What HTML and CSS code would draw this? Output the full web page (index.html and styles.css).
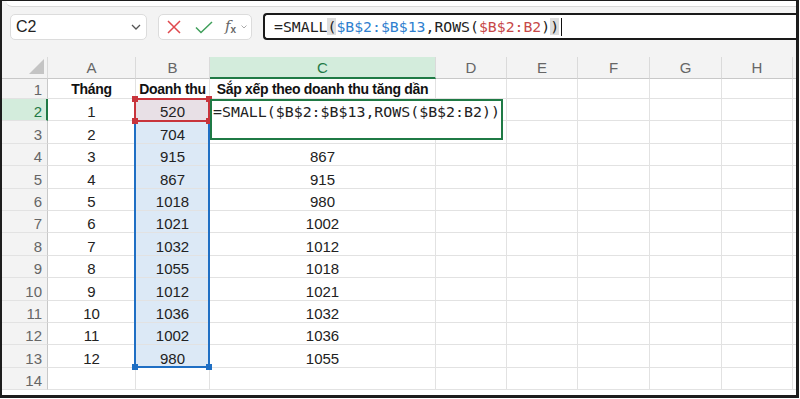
FILE: index.html
```html
<!DOCTYPE html>
<html lang="vi">
<head>
  <meta charset="UTF-8" />
  <meta name="viewport" content="width=device-width, initial-scale=1.0" />
  <title>SMALL - sắp xếp doanh thu</title>
  <link rel="stylesheet" href="styles.css">
</head>
<body>
  <div class="frame">
    <div class="top">
      <div class="ribbon-edge"></div>

      <div class="formula-bar">
        <div class="name-box">
          <span>C2</span>
          <svg width="10" height="6" viewBox="0 0 10 6"><path d="M1 1 L5 5 L9 1" fill="none" stroke="#555" stroke-width="1.3"/></svg>
        </div>
        <div class="fx-box">
          <svg class="ico-x" width="14" height="14" viewBox="0 0 14 14"><path d="M1 1 L13 13 M13 1 L1 13" stroke="#e0484d" stroke-width="1.5" fill="none"/></svg>
          <svg class="ico-ok" width="18" height="13" viewBox="0 0 18 13"><path d="M1 6.5 L6 11.5 L17 1" stroke="#3f9f5a" stroke-width="1.5" fill="none"/></svg>
          <span class="fx"><i>f</i><sub>x</sub></span>
          <svg width="6" height="4" viewBox="0 0 6 4"><path d="M0.5 0.5 L3 3 L5.5 0.5" fill="none" stroke="#aaa" stroke-width="1"/></svg>
        </div>
        <div class="formula-input">
          <span>=SMALL</span><span class="paren">(</span><span class="ref-blue">$B$2:$B$13</span><span>,ROWS(</span><span class="ref-red">$B$2:B2</span><span>)</span><span class="paren">)</span><span class="caret"></span>
        </div>
      </div>
    </div>

    <div class="sheet">
      <div class="row head">
        <div class="corner"><svg width="15" height="15" viewBox="0 0 15 15"><path d="M15 0 L15 15 L0 15 Z" fill="#c4c4c4"/></svg></div>
        <div class="ch">A</div><div class="ch">B</div><div class="ch active">C</div><div class="ch">D</div>
        <div class="ch">E</div><div class="ch">F</div><div class="ch">G</div><div class="ch">H</div><div class="ch end"></div>
      </div>
      <div class="row first">
        <div class="rh">1</div>
        <div class="c b">Tháng</div><div class="c b">Doanh thu</div><div class="c b">Sắp xếp theo doanh thu tăng dần</div>
        <div class="c"></div><div class="c"></div><div class="c"></div><div class="c"></div><div class="c"></div><div class="c end"></div>
      </div>
      <div class="row">
        <div class="rh active">2</div>
        <div class="c">1</div><div class="c cur">520</div><div class="c"></div>
        <div class="c"></div><div class="c"></div><div class="c"></div><div class="c"></div><div class="c"></div><div class="c end"></div>
      </div>
      <div class="row">
        <div class="rh">3</div>
        <div class="c">2</div><div class="c sel">704</div><div class="c"></div>
        <div class="c"></div><div class="c"></div><div class="c"></div><div class="c"></div><div class="c"></div><div class="c end"></div>
      </div>
      <div class="row">
        <div class="rh">4</div>
        <div class="c">3</div><div class="c sel">915</div><div class="c">867</div>
        <div class="c"></div><div class="c"></div><div class="c"></div><div class="c"></div><div class="c"></div><div class="c end"></div>
      </div>
      <div class="row">
        <div class="rh">5</div>
        <div class="c">4</div><div class="c sel">867</div><div class="c">915</div>
        <div class="c"></div><div class="c"></div><div class="c"></div><div class="c"></div><div class="c"></div><div class="c end"></div>
      </div>
      <div class="row">
        <div class="rh">6</div>
        <div class="c">5</div><div class="c sel">1018</div><div class="c">980</div>
        <div class="c"></div><div class="c"></div><div class="c"></div><div class="c"></div><div class="c"></div><div class="c end"></div>
      </div>
      <div class="row">
        <div class="rh">7</div>
        <div class="c">6</div><div class="c sel">1021</div><div class="c">1002</div>
        <div class="c"></div><div class="c"></div><div class="c"></div><div class="c"></div><div class="c"></div><div class="c end"></div>
      </div>
      <div class="row">
        <div class="rh">8</div>
        <div class="c">7</div><div class="c sel">1032</div><div class="c">1012</div>
        <div class="c"></div><div class="c"></div><div class="c"></div><div class="c"></div><div class="c"></div><div class="c end"></div>
      </div>
      <div class="row">
        <div class="rh">9</div>
        <div class="c">8</div><div class="c sel">1055</div><div class="c">1018</div>
        <div class="c"></div><div class="c"></div><div class="c"></div><div class="c"></div><div class="c"></div><div class="c end"></div>
      </div>
      <div class="row">
        <div class="rh">10</div>
        <div class="c">9</div><div class="c sel">1012</div><div class="c">1021</div>
        <div class="c"></div><div class="c"></div><div class="c"></div><div class="c"></div><div class="c"></div><div class="c end"></div>
      </div>
      <div class="row">
        <div class="rh">11</div>
        <div class="c">10</div><div class="c sel">1036</div><div class="c">1032</div>
        <div class="c"></div><div class="c"></div><div class="c"></div><div class="c"></div><div class="c"></div><div class="c end"></div>
      </div>
      <div class="row">
        <div class="rh">12</div>
        <div class="c">11</div><div class="c sel">1002</div><div class="c">1036</div>
        <div class="c"></div><div class="c"></div><div class="c"></div><div class="c"></div><div class="c"></div><div class="c end"></div>
      </div>
      <div class="row">
        <div class="rh">13</div>
        <div class="c">12</div><div class="c sel">980</div><div class="c">1055</div>
        <div class="c"></div><div class="c"></div><div class="c"></div><div class="c"></div><div class="c"></div><div class="c end"></div>
      </div>
      <div class="row">
        <div class="rh">14</div>
        <div class="c"></div><div class="c"></div><div class="c"></div>
        <div class="c"></div><div class="c"></div><div class="c"></div><div class="c"></div><div class="c"></div><div class="c end"></div>
      </div>

      <!-- selection overlays -->
      <div class="range-blue"></div>
      <div class="handle blue h-bl"></div>
      <div class="handle blue h-br"></div>
      <div class="range-red"></div>
      <div class="handle red r-tl"></div>
      <div class="handle red r-tr"></div>
      <div class="handle red r-bl"></div>
      <div class="handle red r-br"></div>
      <div class="edit-box">=SMALL($B$2:$B$13,ROWS($B$2:B2))</div>
    </div>
  </div>
</body>
</html>
```

FILE: styles.css
```css
body {
  margin: 0;
  background-color: #fff;
  font-family: "Liberation Sans", Arial, sans-serif;
  color: #222;
}

.frame {
  width: 799px;
  height: 398px;
  box-sizing: border-box;
  border: 2px solid #1c1c1c;
  border-top-width: 1px;
  border-right-width: 3px;
  border-bottom-width: 3px;
  background-color: #fff;
  overflow: hidden;
}

.top {
  background-color: #f3f3f3;
}

.ribbon-edge {
  height: 5px;
  background-color: #fff;
  border-bottom: 1px solid #d9d9d9;
  border-bottom-left-radius: 6px;
  margin-left: 4px;
}

/* Formula bar */
.formula-bar {
  display: flex;
  align-items: flex-start;
  padding: 7px 0 17px 8px;
  height: 26px;
}

.name-box {
  width: 137px;
  height: 26px;
  box-sizing: border-box;
  background-color: #fff;
  border: 1px solid #dcdcdc;
  border-radius: 5px;
  display: flex;
  align-items: center;
  justify-content: space-between;
  padding: 0 5px 0 5px;
  font-size: 16px;
  color: #222;
}

.fx-box {
  margin-left: 11px;
  width: 94px;
  height: 26px;
  box-sizing: border-box;
  background-color: #fff;
  border: 1px solid #dcdcdc;
  border-radius: 5px;
  display: flex;
  align-items: center;
  padding-left: 8px;
}

.ico-x {
  margin-right: 14px;
}

.ico-ok {
  margin-right: 12px;
}

.fx {
  font-family: "DejaVu Serif", serif;
  font-size: 15px;
  color: #666;
  margin-right: 5px;
  line-height: 1;
}

.fx sub {
  font-family: "Liberation Sans", sans-serif;
  font-size: 10px;
  font-weight: bold;
  vertical-align: -2px;
}

.formula-input {
  flex: 1;
  margin-left: 11px;
  margin-top: -1px;
  height: 27px;
  box-sizing: border-box;
  background-color: #fff;
  border: 2px solid #1a1a1a;
  border-right: none;
  border-radius: 4px 0 0 4px;
  display: flex;
  align-items: center;
  padding-left: 9px;
  font-family: "DejaVu Sans Mono", "Liberation Mono", monospace;
  font-size: 14.8px;
  color: #222;
  white-space: pre;
}

.paren {
  background-color: #dedede;
}

.ref-blue {
  color: #2f7fcf;
}

.ref-red {
  color: #c74848;
}

.caret {
  width: 1px;
  height: 18px;
  background-color: #111;
  margin-left: 2px;
}

/* Sheet grid */
.sheet {
  position: relative;
  background-color: #fff;
}

.row {
  display: grid;
  grid-template-columns: 46px 88px 74px 226px 71px 71px 72px 72px 71px 1fr;
  height: 22.4px;
}

.row.head {
  height: 22px;
  background-color: #f3f3f3;
}

.row.first {
  height: 20px;
}

.corner {
  display: flex;
  align-items: flex-end;
  justify-content: flex-end;
  padding: 0 3px 4px 0;
  box-sizing: border-box;
  border-right: 1px solid #dadada;
  border-bottom: 1px solid #c8c8c8;
}

.ch {
  display: flex;
  align-items: center;
  justify-content: center;
  font-size: 15px;
  color: #666;
  border-right: 1px solid #dadada;
  border-bottom: 1px solid #c8c8c8;
  box-sizing: border-box;
}

.ch.active {
  background-color: #d3ecdc;
  color: #1f7a45;
  border-bottom: 2px solid #1f7a45;
}

.ch.end {
  border-right: none;
}

.rh {
  display: flex;
  align-items: flex-end;
  justify-content: flex-end;
  padding-right: 5px;
  font-size: 15px;
  color: #666;
  background-color: #f3f3f3;
  border-right: 1px solid #c8c8c8;
  border-bottom: 1px solid #e2e2e2;
  box-sizing: border-box;
}

.rh.active {
  background-color: #d3ecdc;
  color: #1f7a45;
  border-right: 2px solid #1f7a45;
  padding-right: 4px;
}

.c {
  display: flex;
  align-items: flex-end;
  justify-content: center;
  font-size: 15px;
  color: #222;
  border-right: 1px solid #e2e2e2;
  border-bottom: 1px solid #e2e2e2;
  box-sizing: border-box;
  white-space: nowrap;
}

.c.end {
  border-right: none;
}

.c.b {
  font-weight: bold;
  font-size: 14px;
  letter-spacing: -0.3px;
  color: #111;
  padding-bottom: 1px;
}

.c.sel {
  background-color: #dce9f6;
}

.c.cur {
  background-color: #e8e0e6;
}

/* Overlays */
.range-blue {
  position: absolute;
  left: 132px;
  top: 64px;
  width: 76px;
  height: 247px;
  box-sizing: border-box;
  border: 2px solid #1f6fc4;
  border-top: none;
}

.range-red {
  position: absolute;
  left: 132px;
  top: 41px;
  width: 76px;
  height: 24px;
  box-sizing: border-box;
  border: 2px solid #c8343c;
}

.handle {
  position: absolute;
  width: 6px;
  height: 6px;
}

.handle.blue {
  background-color: #1f6fc4;
  top: 307px;
}

.h-bl { left: 130px; }
.h-br { left: 204px; }

.handle.red {
  background-color: #c8343c;
}

.r-tl { left: 130px; top: 39px; }
.r-tr { left: 204px; top: 39px; }
.r-bl { left: 130px; top: 61px; }
.r-br { left: 204px; top: 61px; }

.edit-box {
  position: absolute;
  left: 208px;
  top: 42px;
  width: 293px;
  height: 41px;
  box-sizing: border-box;
  border: 2px solid #1f7a45;
  background-color: #fff;
  padding: 2px 0 0 1px;
  font-family: "DejaVu Sans Mono", "Liberation Mono", monospace;
  font-size: 14.9px;
  line-height: 18px;
  color: #222;
  white-space: nowrap;
}
```
